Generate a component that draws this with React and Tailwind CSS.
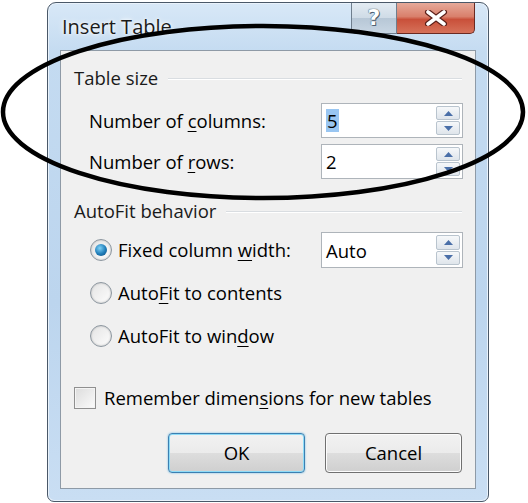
import React from 'react'

const font = { fontFamily: "'Open Sans', 'Noto Sans', sans-serif" }

function U({ children }) {
  return <span className="underline decoration-1 underline-offset-[3px]">{children}</span>
}

function Spinner() {
  return (
    <div className="flex flex-col w-[26px] h-full py-[2px] pr-[2px] gap-[1px]">
      {['up', 'down'].map(dir => (
        <div
          key={dir}
          className="flex-1 flex items-center justify-center border border-[#b9c4ce] rounded-[2px] bg-gradient-to-b from-[#f6f8fa] to-[#dfe5eb]"
        >
          <svg width="9" height="5" viewBox="0 0 9 5">
            {dir === 'up'
              ? <polygon points="0,5 9,5 4.5,0" fill="#4a6fa8" />
              : <polygon points="0,0 9,0 4.5,5" fill="#4a6fa8" />}
          </svg>
        </div>
      ))}
    </div>
  )
}

function SpinBox({ value, selected, height = 'h-[35px]' }) {
  return (
    <div className={`flex items-stretch w-[142px] ${height} border border-[#aeb4ba] bg-white`}>
      <div className="flex-1 flex items-center pl-[4px]">
        <span className={`text-[18.5px] leading-[23px] text-black ${selected ? 'bg-[#99c6f2] px-[1px]' : ''}`}>{value}</span>
      </div>
      <Spinner />
    </div>
  )
}

function GroupHeader({ label }) {
  return (
    <div className="flex items-center h-[20px] pl-[13px] pr-[13px] gap-[10px]">
      <span className="text-[18.5px] text-[#1a1a1a] whitespace-nowrap">{label}</span>
      <div className="flex-1 h-[2px] border-t border-[#d9dde1] border-b border-b-white mt-[2px]" />
    </div>
  )
}

function Radio({ checked }) {
  return (
    <div className="w-[22px] h-[22px] rounded-full border border-[#8c969f] bg-gradient-to-br from-[#e4e4e4] to-[#fdfdfd] flex items-center justify-center shadow-[inset_0_0_2px_#b0b0b0]">
      {checked && (
        <div className="w-[12px] h-[12px] rounded-full bg-[radial-gradient(circle_at_40%_35%,#7fd2f7,#1f7cb8_55%,#0e4a7a)]" />
      )}
    </div>
  )
}

function WinButton({ children, focused }) {
  return (
    <button
      className={`w-[137px] h-[40px] rounded-[4px] border ${focused ? 'border-[#3c7fb1] shadow-[0_0_0_1px_#8fdcf8_inset,0_0_2px_#5fb5e5]' : 'border-[#707070] shadow-[0_0_0_1px_#fcfcfc_inset]'} bg-[linear-gradient(to_bottom,#f2f2f2_0%,#ebebeb_50%,#dddddd_51%,#cfcfcf_100%)] text-[18.5px] text-black flex items-center justify-center`}
    >
      {children}
    </button>
  )
}

export default function App() {
  return (
    <div className="relative w-[528px] h-[503px] bg-white overflow-hidden" style={font}>
      {/* Dialog window */}
      <div className="ml-[47px] mt-[2px] w-[442px] h-[500px] rounded-t-[9px] rounded-b-[7px] border border-[#4a5868] bg-[linear-gradient(to_bottom,#d8e8f7_0%,#c4dbf1_10%,#bcd5ee_60%,#c9def3_100%)] flex flex-col shadow-[inset_0_0_0_1px_#e9f2fb]">
        {/* Title bar */}
        <div className="h-[47px] flex items-start shrink-0">
          <div className="pl-[14px] pt-[11px] text-[20px] leading-[26px] text-[#1b1b1b] [text-shadow:0_0_6px_#ffffff,0_0_3px_#ffffff]">
            Insert Table
          </div>
          <div className="ml-auto mr-[13px] flex h-[31px]">
            <div className="w-[46px] h-full rounded-bl-[5px] border border-t-0 border-[#6f7e8d] bg-[linear-gradient(to_bottom,#e3ebf2_0%,#cfdbe6_50%,#b7c7d6_51%,#c8d6e3_100%)] flex items-center justify-center">
              <span className="text-[22px] leading-none font-bold text-white [text-shadow:0_0_1px_#3a4a5a,0_0_1px_#3a4a5a,1px_1px_0_#55677a]" style={{ fontFamily: "'DejaVu Sans', sans-serif" }}>?</span>
            </div>
            <div className="w-[78px] h-full rounded-br-[5px] border border-t-0 border-l-0 border-[#6a2a22] bg-[linear-gradient(to_bottom,#e6a999_0%,#d9806c_45%,#c9503a_55%,#d6725a_100%)] flex items-center justify-center">
              <svg width="24" height="16" viewBox="0 0 24 16">
                <path d="M4 2 L20 14 M20 2 L4 14" stroke="#5a1e18" strokeWidth="6" strokeLinecap="round" />
                <path d="M4 2 L20 14 M20 2 L4 14" stroke="#ffffff" strokeWidth="3.6" strokeLinecap="round" />
              </svg>
            </div>
          </div>
        </div>

        {/* Client area */}
        <div className="mx-[12px] mb-[12px] flex-1 border border-[#8e9aa6] bg-[#f0f0f0] flex flex-col pt-[17px]">
          <GroupHeader label="Table size" />

          <div className="flex items-center justify-between h-[35px] mt-[15px] pl-[28px] pr-[12px]">
            <span className="text-[18.5px] text-black">Number of <U>c</U>olumns:</span>
            <SpinBox value="5" selected />
          </div>
          <div className="flex items-center justify-between h-[35px] mt-[6px] pl-[28px] pr-[12px]">
            <span className="text-[18.5px] text-black">Number of <U>r</U>ows:</span>
            <SpinBox value="2" />
          </div>

          <div className="mt-[22px]">
            <GroupHeader label="AutoFit behavior" />
          </div>

          <div className="flex flex-col gap-[7px] mt-[11px] pl-[29px] pr-[12px]">
            <div className="flex items-center h-[36px]">
              <Radio checked />
              <span className="ml-[6px] text-[18.5px] text-black">Fixed column <U>w</U>idth:</span>
              <div className="ml-auto">
                <SpinBox value="Auto" height="h-[36px]" />
              </div>
            </div>
            <div className="flex items-center h-[36px]">
              <Radio />
              <span className="ml-[6px] text-[18.5px] text-black">Auto<U>F</U>it to contents</span>
            </div>
            <div className="flex items-center h-[36px]">
              <Radio />
              <span className="ml-[6px] text-[18.5px] text-black">AutoFit to win<U>d</U>ow</span>
            </div>
          </div>

          <div className="flex items-center h-[22px] mt-[33px] pl-[13px]">
            <div className="w-[22px] h-[22px] border border-[#8f8f8f] bg-gradient-to-br from-[#dcdcdc] to-[#fbfbfb] shadow-[inset_0_0_0_1px_#f4f4f4]" />
            <span className="ml-[8px] text-[18.5px] text-black">Remember dimen<U>s</U>ions for new tables</span>
          </div>

          <div className="flex justify-end gap-[20px] mt-[24px] pr-[13px]">
            <WinButton focused>OK</WinButton>
            <WinButton>Cancel</WinButton>
          </div>
        </div>
      </div>

      {/* Hand-drawn ellipse annotation */}
      <svg className="absolute inset-0 pointer-events-none" width="528" height="503" viewBox="0 0 528 503">
        <ellipse cx="263" cy="112" rx="260" ry="86" fill="none" stroke="#000" strokeWidth="4.5" />
      </svg>
    </div>
  )
}
